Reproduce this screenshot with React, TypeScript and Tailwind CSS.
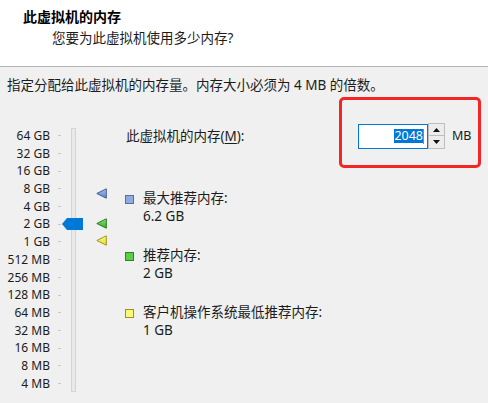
import React from 'react';

const scaleLabels = [
  '64 GB', '32 GB', '16 GB', '8 GB', '4 GB', '2 GB', '1 GB',
  '512 MB', '256 MB', '128 MB', '64 MB', '32 MB', '16 MB', '8 MB', '4 MB',
];

const Marker: React.FC<{ id: string; light: string; dark: string; stroke: string; className: string }> = ({
  id, light, dark, stroke, className,
}) => (
  <svg width="11" height="11" viewBox="0 0 11 11" className={className}>
    <defs>
      <linearGradient id={id} x1="0" y1="0" x2="0" y2="1">
        <stop offset="0" stopColor={light} />
        <stop offset="1" stopColor={dark} />
      </linearGradient>
    </defs>
    <polygon points="0.8,5.5 10.3,0.8 10.3,10.2" fill={`url(#${id})`} stroke={stroke} strokeWidth="1" strokeLinejoin="round" />
  </svg>
);

const LegendItem: React.FC<{ label: string; value: string; fill: string; border: string }> = ({ label, value, fill, border }) => (
  <div className="flex items-start">
    <div className={`mt-[5px] w-[9px] h-[9px] border ${border} ${fill}`} />
    <div className="ml-[9px] leading-[17.5px]">
      <div>{label}</div>
      <div>{value}</div>
    </div>
  </div>
);

export default function App() {
  return (
    <div className="w-[488px] h-[403px] overflow-hidden bg-[#f0f0f0] text-[#1c1c1c] text-[13.5px] font-['Noto_Sans','Noto_Sans_CJK_SC',sans-serif]">
      {/* header */}
      <div className="h-[67px] bg-white border-b border-[#b4b4b4] pl-[23px] pt-[7px]">
        <div className="text-[14px] font-bold leading-[20px] text-black">此虚拟机的内存</div>
        <div className="pl-[29px] mt-[1px] leading-[20px]">您要为此虚拟机使用多少内存?</div>
      </div>

      <div className="pl-[7px] pr-[7px]">
        <p className="pt-[9px] leading-[18px]">指定分配给此虚拟机的内存量。内存大小必须为 4 MB 的倍数。</p>

        <div className="flex items-start">
          {/* slider */}
          <div className="relative mt-[33px] w-[103px] h-[265.5px] flex">
            <div className="w-[43px] flex flex-col text-[12px] text-right whitespace-nowrap">
              {scaleLabels.map(l => (
                <div key={l} className="h-[17.7px] leading-[17.7px]">{l}</div>
              ))}
            </div>
            <div className="ml-[8px] w-[3px] flex flex-col">
              {scaleLabels.map(l => (
                <div key={l} className="h-[17.7px] flex items-center">
                  <div className="w-[3px] h-[1px] bg-[#c9c9c9]" />
                </div>
              ))}
            </div>
            <div className="ml-[10px] w-[5px] my-[1px] border border-[#d4d4d4] bg-[#e9e9e9]" />

            <svg width="21" height="12" viewBox="0 0 21 12" className="absolute left-[55px] top-[91px]">
              <polygon points="0,6 5,0 21,0 21,12 5,12" fill="#0078d7" />
            </svg>
            <Marker id="mMax" light="#a9c0e6" dark="#5e84c4" stroke="#3d5f9c" className="absolute left-[89px] top-[61px]" />
            <Marker id="mRec" light="#8ee07c" dark="#35a82a" stroke="#23801a" className="absolute left-[89px] top-[91px]" />
            <Marker id="mMin" light="#fbf89a" dark="#e6dc2c" stroke="#a1931a" className="absolute left-[89px] top-[108px]" />
          </div>

          {/* right side */}
          <div className="ml-[15px] flex-1 flex flex-col">
            <div className="flex items-start">
              <div className="mt-[33px] pl-[1px] leading-[18px]">
                此虚拟机的内存(<span className="underline underline-offset-2">M</span>):
              </div>
              <div className="ml-auto mt-[3px] w-[142px] h-[71px] border-[3px] border-[#f42525] rounded-[5px] pl-[16px] pt-[23px]">
                <div className="flex items-center">
                  <div className="w-[70px] h-[25px] bg-white border border-[#0078d7] flex items-center justify-end pr-[3px]">
                    <span className="bg-[#0078d7] text-white text-[12.5px] leading-[14px]">2048</span>
                    <span className="w-[1px] h-[15px] bg-[#d2781e]" />
                  </div>
                  <div className="w-[17px] h-[26px] flex flex-col">
                    <div className="h-[13px] bg-[#ececec] border border-[#bdbdbd] flex items-center justify-center">
                      <svg width="7" height="4" viewBox="0 0 7 4"><polygon points="0,4 3.5,0 7,4" fill="#111" /></svg>
                    </div>
                    <div className="h-[13px] bg-[#ececec] border border-t-0 border-[#bdbdbd] flex items-center justify-center">
                      <svg width="7" height="4" viewBox="0 0 7 4"><polygon points="0,0 7,0 3.5,4" fill="#111" /></svg>
                    </div>
                  </div>
                  <span className="ml-[7px] text-[12.5px] leading-[18px]">MB</span>
                </div>
              </div>
            </div>

            <div className="mt-[22px] flex flex-col gap-[22px]">
              <LegendItem label="最大推荐内存:" value="6.2 GB" fill="bg-[#8eadde]" border="border-[#53719f]" />
              <LegendItem label="推荐内存:" value="2 GB" fill="bg-[#5ccd48]" border="border-[#2a8421]" />
              <LegendItem label="客户机操作系统最低推荐内存:" value="1 GB" fill="bg-[#fbf96f]" border="border-[#97913a]" />
            </div>
          </div>
        </div>
      </div>
    </div>
  );
}
